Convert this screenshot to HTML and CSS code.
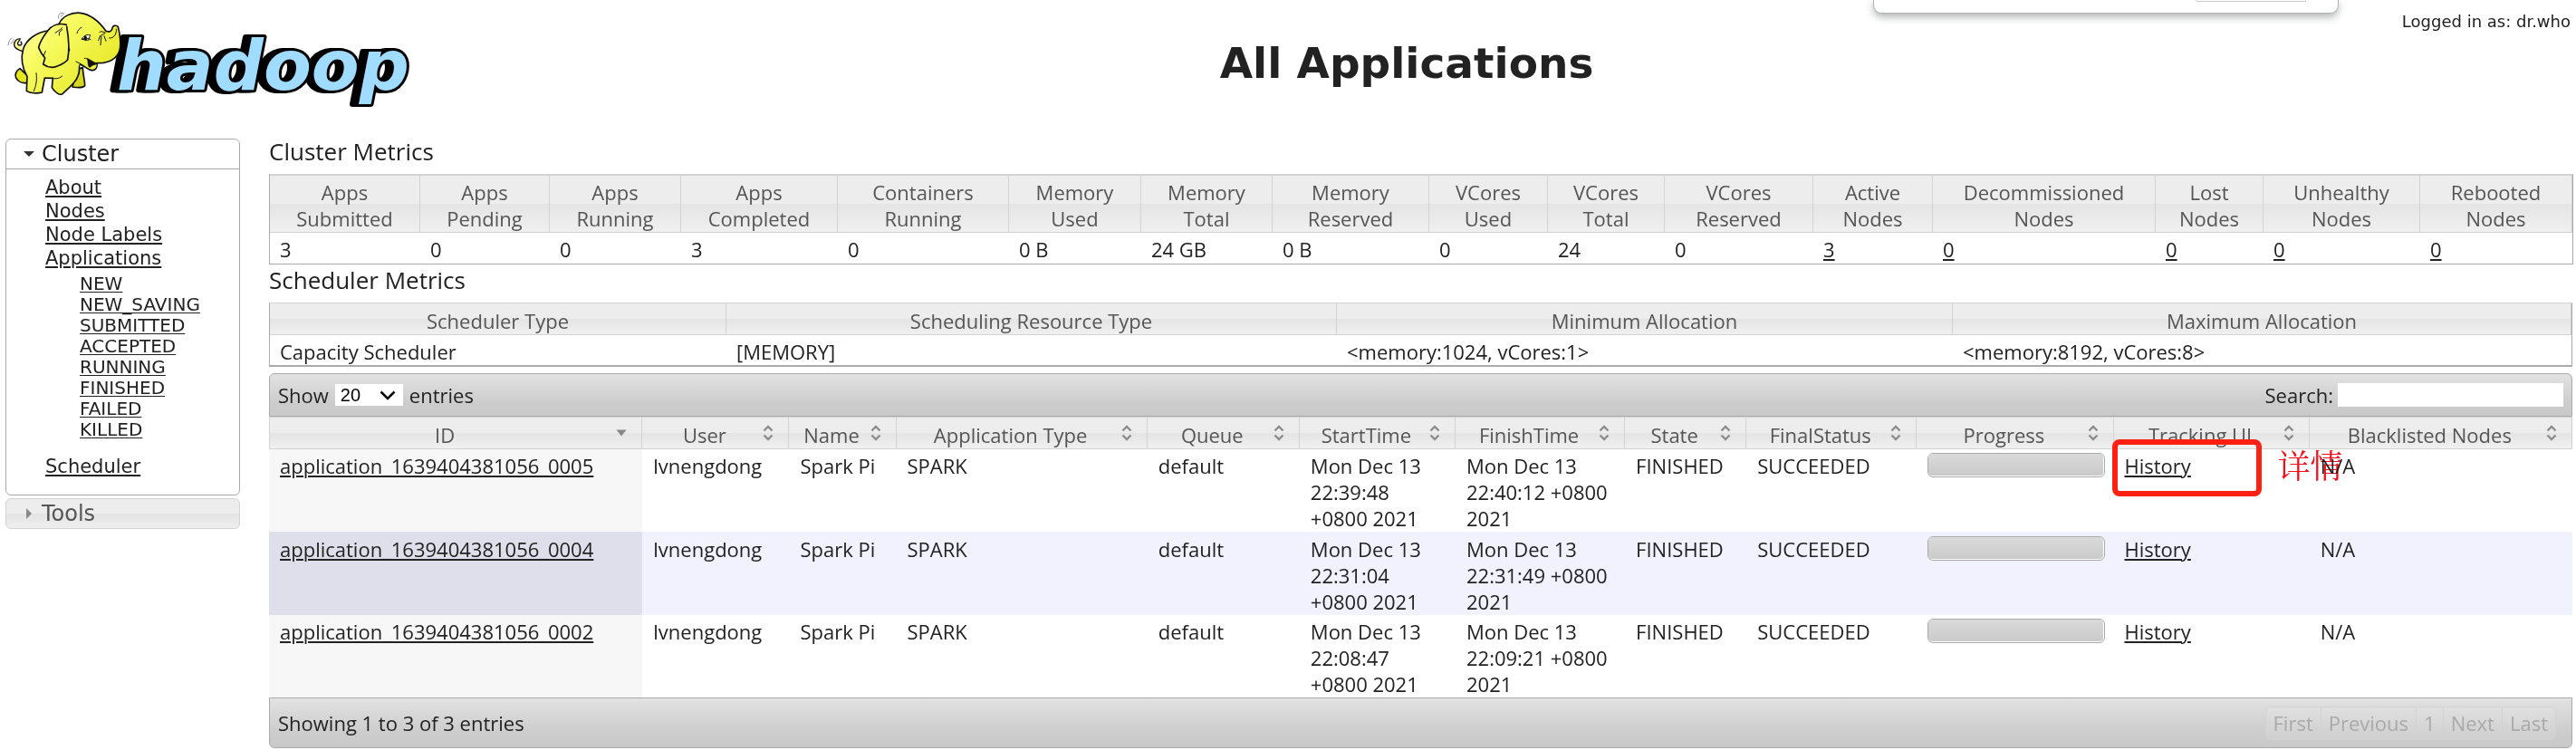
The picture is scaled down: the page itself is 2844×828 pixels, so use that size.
FILE: index.html
```html
<!DOCTYPE html>
<html lang="en">
<head>
<meta charset="utf-8">
<title>All Applications</title>
<link rel="stylesheet" href="styles.css">
</head>
<body>
<div class="popup"><button class="popup-button" type="button" aria-label="Close"></button></div>

<svg class="symbols" aria-hidden="true">
  <symbol id="sort-both" viewBox="0 0 12 18"><path d="M1.500 6.500 6 2l4.500 4.500M1.500 11.500 6 16l4.500-4.500" fill="none" stroke="#8c8c8c" stroke-width="2.400"/></symbol>
  <symbol id="sort-desc" viewBox="0 0 12 18"><path d="M.5 5.500h11L6 12.500z" fill="#888"/></symbol>
</svg>

<header class="header">
  <a class="logo" href="#" aria-label="Hadoop">
    <svg width="460" height="130" viewBox="6 0 460 130">
      <defs>
        <linearGradient id="skin" gradientUnits="userSpaceOnUse" x1="60" y1="30" x2="340" y2="290">
          <stop offset="0" stop-color="#ffffb4"/><stop offset=".35" stop-color="#f8fb62"/><stop offset="1" stop-color="#e4e61e"/>
        </linearGradient>
      </defs>
      <text class="wordmark" x="129" y="99">hadoop</text>
      <g transform="translate(4 6) scale(.3333)" fill="url(#skin)" stroke="#111" stroke-width="5" stroke-linejoin="round" stroke-linecap="round">
        <path d="M62 152C52 146 36 146 35 131 34 118 44 109 55 111L50 119C44 124 46 132 54 132 60 132 62 126 57 120" stroke-width="4"/>
        <path d="M54 209C44 215 36 226 41 240 48 252 62 259 76 256L82 236Z" fill="#e4e61e"/>
        <path d="M243 212 262 206C263 228 269 250 269 266 262 274 240 272 228 270Z" fill="#d6d820"/>
        <path d="M151 84C108 86 74 116 65 144 56 176 62 208 78 235L76 283C88 292 112 292 127 288L136 240 163 241 160 272C168 286 184 298 194 294 210 278 238 258 246 234 252 220 252 202 248 184L170 80Z"/>
        <path d="M183 62C194 36 224 22 254 25 290 30 316 52 339 85 350 90 360 84 360 75 361 67 370 64 379 70 384 90 388 116 386 139 383 168 360 186 330 190L309 191C312 205 304 216 292 215 278 214 270 200 250 194 236 184 222 160 215 140Z"/>
        <path d="M236 120 252 193 236 230 200 210 214 160Z" stroke="none"/>
        <path d="M278 176C288 180 300 190 309 191 305 201 295 207 283 204 278 196 280 186 278 176Z" fill="#111" stroke-width="2"/>
        <path d="M286 207C294 198 302 196 308 197 306 210 296 214 286 207Z" fill="#eced40" stroke="none"/>
        <path d="M208 64C180 57 158 68 146 84 134 100 120 118 116 140 122 156 130 166 137 174L131 195C144 204 162 208 176 202 188 197 204 190 212 180 218 150 216 110 209 70"/>
        <path d="M171 91C184 82 192 78 194 74M184 99C182 90 188 84 194 80M139 151 132 168M240 186 256 194M268 175C274 174 278 178 280 182M243 92C245 82 251 76 258 73M108 224C112 250 106 268 100 284M163 241C176 245 188 240 194 234" fill="none" stroke-width="3"/>
        <path d="M259 111C266 98 278 96 287 98L281 114Z" fill="#fff" stroke-width="3"/>
        <path d="M269 101C276 99 278 112 272 117 265 115 265 106 269 101Z" fill="#111" stroke-width="1"/>
        <path d="M259 113C268 106 278 108 288 113M320 100 314 116M324 101 321 131M333 101 339 118M318 88C324 84 332 88 337 91L325 98M350 108C367 110 376 90 373 78" fill="none" stroke-width="3"/>
        <path d="M15 131C17 119 21 111 27 108M24 127 34 113M182 43C180 34 184 28 188 26L196 25M189 37 201 26" fill="none" stroke="#555" stroke-width="2"/>
      </g>
    </svg>
  </a>
  <h1 class="title">All Applications</h1>
  <div class="login">Logged in as: dr.who</div>
</header>

<div class="layout">
  <nav class="sidebar">
    <section class="panel">
      <h3 class="panel-head"><svg class="caret" viewBox="0 0 14 14"><path d="M1 4h12L7 10z" fill="#333"/></svg>Cluster</h3>
      <div class="panel-body">
        <ul class="menu">
          <li><a href="#">About</a></li>
          <li><a href="#">Nodes</a></li>
          <li><a href="#">Node Labels</a></li>
          <li><a href="#">Applications</a>
            <ul class="submenu">
              <li><a href="#">NEW</a></li>
              <li><a href="#">NEW_SAVING</a></li>
              <li><a href="#">SUBMITTED</a></li>
              <li><a href="#">ACCEPTED</a></li>
              <li><a href="#">RUNNING</a></li>
              <li><a href="#">FINISHED</a></li>
              <li><a href="#">FAILED</a></li>
              <li><a href="#">KILLED</a></li>
            </ul>
          </li>
          <li><a href="#">Scheduler</a></li>
        </ul>
      </div>
    </section>
    <section class="panel panel-closed">
      <h3 class="panel-head"><svg class="caret" viewBox="0 0 14 14"><path d="M4 1v12l6-6z" fill="#888"/></svg>Tools</h3>
    </section>
  </nav>

  <main class="content">
    <h2 class="section-title">Cluster Metrics</h2>
    <table class="metrics cluster">
      <colgroup><col class="w166"><col class="w143"><col class="w145"><col class="w173"><col class="w189"><col class="w146"><col class="w145"><col class="w173"><col class="w131"><col class="w129"><col class="w164"><col class="w132"><col class="w246"><col class="w119"><col class="w173"><col class="w168"></colgroup>
      <thead><tr><th>Apps<br>Submitted</th><th>Apps<br>Pending</th><th>Apps<br>Running</th><th>Apps<br>Completed</th><th>Containers<br>Running</th><th>Memory<br>Used</th><th>Memory<br>Total</th><th>Memory<br>Reserved</th><th>VCores<br>Used</th><th>VCores<br>Total</th><th>VCores<br>Reserved</th><th>Active<br>Nodes</th><th>Decommissioned<br>Nodes</th><th>Lost<br>Nodes</th><th>Unhealthy<br>Nodes</th><th>Rebooted<br>Nodes</th></tr></thead>
      <tbody><tr><td>3</td><td>0</td><td>0</td><td>3</td><td>0</td><td>0 B</td><td>24 GB</td><td>0 B</td><td>0</td><td>24</td><td>0</td><td><a href="#">3</a></td><td><a href="#">0</a></td><td><a href="#">0</a></td><td><a href="#">0</a></td><td><a href="#">0</a></td></tr></tbody>
    </table>

    <h2 class="section-title section-second">Scheduler Metrics</h2>
    <table class="metrics scheduler">
      <colgroup><col class="w504"><col class="w674"><col class="w680"><col class="w683"></colgroup>
      <thead><tr><th>Scheduler Type</th><th>Scheduling Resource Type</th><th>Minimum Allocation</th><th>Maximum Allocation</th></tr></thead>
      <tbody><tr><td>Capacity Scheduler</td><td>[MEMORY]</td><td>&lt;memory:1024, vCores:1&gt;</td><td>&lt;memory:8192, vCores:8&gt;</td></tr></tbody>
    </table>

    <div class="bar bar-top">
      <label class="length">Show <select class="length-select"><option>20</option></select> entries</label>
      <label class="search">Search: <input class="search-input" type="text"></label>
    </div>
    <table class="apps">
      <colgroup><col class="w412"><col class="w162"><col class="w118"><col class="w277"><col class="w168"><col class="w172"><col class="w187"><col class="w134"><col class="w188"><col class="w217"><col class="w216"><col class="w290"></colgroup>
      <thead><tr>
        <th><div class="head"><span>ID</span><svg><use href="#sort-desc"/></svg></div></th>
        <th><div class="head"><span>User</span><svg><use href="#sort-both"/></svg></div></th>
        <th><div class="head"><span>Name</span><svg><use href="#sort-both"/></svg></div></th>
        <th><div class="head"><span>Application Type</span><svg><use href="#sort-both"/></svg></div></th>
        <th><div class="head"><span>Queue</span><svg><use href="#sort-both"/></svg></div></th>
        <th><div class="head"><span>StartTime</span><svg><use href="#sort-both"/></svg></div></th>
        <th><div class="head"><span>FinishTime</span><svg><use href="#sort-both"/></svg></div></th>
        <th><div class="head"><span>State</span><svg><use href="#sort-both"/></svg></div></th>
        <th><div class="head"><span>FinalStatus</span><svg><use href="#sort-both"/></svg></div></th>
        <th><div class="head"><span>Progress</span><svg><use href="#sort-both"/></svg></div></th>
        <th><div class="head"><span>Tracking UI</span><svg><use href="#sort-both"/></svg></div></th>
        <th><div class="head"><span>Blacklisted Nodes</span><svg><use href="#sort-both"/></svg></div></th>
      </tr></thead>
      <tbody>
        <tr><td><a href="#">application_1639404381056_0005</a></td><td>lvnengdong</td><td>Spark Pi</td><td>SPARK</td><td>default</td><td>Mon Dec 13 22:39:48 +0800 2021</td><td>Mon Dec 13 22:40:12 +0800 2021</td><td>FINISHED</td><td>SUCCEEDED</td><td><div class="progress"><div class="progress-fill"></div></div></td><td class="marked"><a href="#">History</a><span class="mark-box"></span><span class="mark-note" lang="zh-CN">详情</span></td><td>N/A</td></tr>
        <tr><td><a href="#">application_1639404381056_0004</a></td><td>lvnengdong</td><td>Spark Pi</td><td>SPARK</td><td>default</td><td>Mon Dec 13 22:31:04 +0800 2021</td><td>Mon Dec 13 22:31:49 +0800 2021</td><td>FINISHED</td><td>SUCCEEDED</td><td><div class="progress"><div class="progress-fill"></div></div></td><td><a href="#">History</a></td><td>N/A</td></tr>
        <tr><td><a href="#">application_1639404381056_0002</a></td><td>lvnengdong</td><td>Spark Pi</td><td>SPARK</td><td>default</td><td>Mon Dec 13 22:08:47 +0800 2021</td><td>Mon Dec 13 22:09:21 +0800 2021</td><td>FINISHED</td><td>SUCCEEDED</td><td><div class="progress"><div class="progress-fill"></div></div></td><td><a href="#">History</a></td><td>N/A</td></tr>
      </tbody>
    </table>
    <div class="bar bar-bottom">
      <span>Showing 1 to 3 of 3 entries</span>
      <div class="pager"><button type="button">First</button><button type="button">Previous</button><button type="button">1</button><button type="button">Next</button><button type="button">Last</button></div>
    </div>
  </main>
</div>
</body>
</html>
```
FILE: styles.css
```css
* { box-sizing: border-box; }
body {
  margin: 0;
  padding: 0 4px 0 6px;
  background: #fff;
  color: #222;
  font: 22px/29px "Open Sans", "Noto Sans", sans-serif;
}
a { color: #222; text-decoration: underline; text-decoration-thickness: 2px; text-underline-offset: 2px; }
ul { list-style: none; margin: 0; padding: 0; }
.symbols { display: none; }

.popup {
  position: absolute;
  top: 0;
  right: 262px;
  width: 514px;
  height: 15px;
  padding-right: 35px;
  border: 1px solid #b0b2b2;
  border-top: 0;
  border-radius: 0 0 9px 9px;
  background: #fff;
  box-shadow: 0 4px 8px rgba(40, 50, 50, .35);
}
.popup-button {
  display: block;
  width: 122px;
  height: 2px;
  margin-left: auto;
  padding: 0;
  border: 1px solid #ccc;
  border-top: 0;
  border-radius: 0 0 4px 4px;
  background: #fff;
}

.header {
  display: grid;
  grid-template-columns: 260px 1fr;
  height: 153px;
  font-family: "DejaVu Sans", sans-serif;
}
.logo svg { display: block; width: 460px; height: 130px; }
.wordmark {
  font: italic bold 77px "DejaVu Sans", sans-serif;
  fill: #a0dcff;
  stroke: #000;
  stroke-width: 6px;
  stroke-linejoin: round;
  paint-order: stroke;
  filter: drop-shadow(-3px 0 0 #000) drop-shadow(-4px 0 0 #000);
}
.title {
  grid-area: 1 / 2;
  margin: 0;
  padding-top: 42px;
  text-align: center;
  font-size: 47px;
  line-height: 56px;
}
.login { grid-area: 1 / 2; justify-self: end; align-self: start; padding: 12px 2px 0 0; font-size: 18px; line-height: 24px; }

.layout { display: grid; grid-template-columns: 259px minmax(0, 1fr); column-gap: 32px; align-items: start; }

.sidebar { display: grid; gap: 3px; font-family: "DejaVu Sans", sans-serif; }
.panel { border: 1px solid #aaa; border-radius: 6px; overflow: hidden; background: #fff; }
.panel-head { display: flex; align-items: center; gap: 7px; margin: 0; padding-left: 18px; font-size: 24px; font-weight: normal; line-height: 32px; }
.caret { width: 14px; height: 14px; }
.panel-body { border-top: 1px solid #aaa; padding: 7px 0 18px 43px; }
.panel-closed { border-color: #d3d3d3; background: linear-gradient(#ededed 50%, #e4e4e4 50%, #eee); }
.panel-closed .panel-head { color: #555; }
.menu { font-size: 21px; line-height: 26px; }
.submenu { margin: 4px 0 16px; padding-left: 38px; font-size: 20px; line-height: 23px; }
.submenu a { text-decoration-thickness: 1px; }

.content { min-width: 0; }
.section-title { margin: 0 0 11px; font-size: 26px; font-weight: normal; line-height: 28px; }
.section-second { margin-top: 3px; }

table { width: 100%; table-layout: fixed; border-collapse: separate; border-spacing: 0; }
th {
  padding: 5px 10px 0;
  border: 1px solid #d3d3d3;
  border-left-width: 0;
  background: linear-gradient(#ededed 50%, #e4e4e4 50%, #f0f0f0);
  color: #555;
  font-weight: normal;
}
td { padding: 4px 10px 0 12px; vertical-align: top; text-align: left; }
.metrics { border: 1px solid #aaa; border-top-color: #d3d3d3; }
.metrics th { padding-top: 4px; }
.metrics td { padding-left: 11px; }
.cluster td { padding-bottom: 1px; }
.scheduler th { border-top: 0; padding: 5px 10px 0; }
.scheduler { border-bottom-width: 2px; }
th:last-child { border-right-color: #ccc; }

.apps th:first-child { border-left-width: 1px; }
.apps tbody tr:nth-child(even) { background: #f2f2ff; }
.apps tbody td:first-child { background: #f7f7f7; }
.apps tbody tr:nth-child(even) td:first-child { background: #dfdfeb; }
.apps tbody tr:nth-child(even) td { padding-top: 5px; }
.head { display: flex; align-items: flex-start; }
.head span { flex: 1; text-align: center; white-space: nowrap; }
.head svg { width: 12px; height: 18px; margin: 3px 6px 0; }

.bar { display: flex; align-items: center; justify-content: space-between; border: 1px solid #aaa; background: linear-gradient(#e2e2e2, #ccc 70%, #c9c9c9); }
.bar-top { height: 48px; margin-top: 7px; padding: 0 9px; border-radius: 6px 6px 0 0; }
.bar-bottom { height: 56px; padding: 0 17px 0 9px; border-radius: 0 0 6px 6px; }
.length, .search { display: flex; align-items: center; gap: 7px; }
.length-select {
  appearance: none;
  width: 75px;
  height: 24px;
  padding: 0 6px;
  border: 0;
  border-radius: 0;
  color: #000;
  font: 20px/24px "Liberation Sans", sans-serif;
  background: #fff url("data:image/svg+xml,%3Csvg xmlns='http://www.w3.org/2000/svg' width='18' height='11'%3E%3Cpath d='M1.500 1.500 9 9l7.500-7.500' fill='none' stroke='black' stroke-width='2.500'/%3E%3C/svg%3E") no-repeat right 8px center;
}
.search { gap: 5px; }
.search-input { width: 249px; height: 26px; padding: 0 4px; border: 0; font: inherit; }

.progress { height: 27px; border: 1px solid #aaa; border-radius: 6px; background: #fff; padding: 0 1px 1px 0; }
.progress-fill { height: 100%; border-radius: 4px; background: linear-gradient(#dadada, #cacaca); }

.marked { position: relative; }
.mark-box { position: absolute; left: -2px; top: -11px; width: 165px; height: 63px; border: 6px solid #ff2014; border-radius: 8px; }
.mark-note { position: absolute; left: 181px; top: -2px; color: #f5101c; font: 36px/38px "Noto Serif CJK SC", "Noto Sans CJK SC", serif; white-space: nowrap; mix-blend-mode: multiply; }

.pager { display: flex; border: 1px solid #d2d2d2; border-radius: 6px; background: rgba(255, 255, 255, .12); }
.pager button { height: 35px; padding: 0 8px; border: 0; border-left: 1px solid #d2d2d2; background: none; color: #a9a9a9; font: inherit; }
.pager button:first-child { border-left: 0; }

.w118 { width: 118px; } .w119 { width: 119px; } .w129 { width: 129px; } .w131 { width: 131px; }
.w132 { width: 132px; } .w134 { width: 134px; } .w143 { width: 143px; } .w145 { width: 145px; }
.w146 { width: 146px; } .w162 { width: 162px; } .w164 { width: 164px; } .w166 { width: 166px; }
.w168 { width: 168px; } .w172 { width: 172px; } .w173 { width: 173px; } .w187 { width: 187px; }
.w188 { width: 188px; } .w189 { width: 189px; } .w216 { width: 216px; } .w217 { width: 217px; }
.w246 { width: 246px; } .w277 { width: 277px; } .w290 { width: 290px; } .w412 { width: 412px; }
.w504 { width: 504px; } .w674 { width: 674px; } .w680 { width: 680px; } .w683 { width: 683px; }
```
